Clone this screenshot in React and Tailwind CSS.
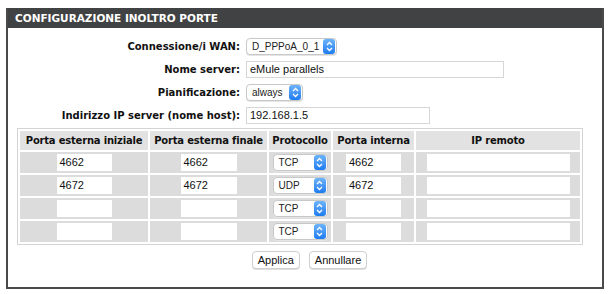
import React from "react";

const Stepper = () => (
  <span className="flex h-[15px] w-[12px] items-center justify-center rounded-[3px] bg-gradient-to-b from-[#6cb3fa] to-[#1a7bf0]">
    <svg width="7" height="11" viewBox="0 0 7 11" fill="none" stroke="white" strokeWidth="1.3">
      <path d="M1 4 L3.5 1.5 L6 4" />
      <path d="M1 7 L3.5 9.5 L6 7" />
    </svg>
  </span>
);

const Select = ({ value, w }) => (
  <div
    className={`flex h-[17px] ${w} items-center justify-between rounded-[4px] border border-[#c8c8c8] bg-white pl-[5px] pr-[1px] text-[10px] text-[#222] shadow-[0_1px_0_#e5e5e5]`}
  >
    <span>{value}</span>
    <Stepper />
  </div>
);

const TextInput = ({ value, w }) => (
  <div className={`h-[17px] ${w} border border-[#d6d6d6] bg-white px-[3px] text-[11px] leading-[15px] text-[#111]`}>
    {value}
  </div>
);

const CellInput = ({ value, w }) => (
  <div className={`h-[17px] ${w} bg-white px-[3px] text-[11px] leading-[17px] text-[#111]`}>{value}</div>
);

const rows = [
  { a: "4662", b: "4662", p: "TCP", c: "4662" },
  { a: "4672", b: "4672", p: "UDP", c: "4672" },
  { a: "", b: "", p: "TCP", c: "" },
  { a: "", b: "", p: "TCP", c: "" },
];

const bold = { fontFamily: '"DejaVu Sans", Verdana, sans-serif' };

export default function App() {
  const sans = { fontFamily: '"Liberation Sans", Arial, sans-serif' };
  return (
    <div className="h-[294px] w-[610px] bg-white pl-[6px] pt-[8px]" style={sans}>
      <div className="flex h-[281px] w-[598px] flex-col border-x-2 border-b-2 border-[#4a4a4a]">
        <div
          className="flex h-[20px] items-center bg-[#414243] pl-[7px] pt-[1px] text-[10.5px] font-bold text-white"
          style={bold}
        >
          CONFIGURAZIONE INOLTRO PORTE
        </div>

        <div className="mt-[10px] grid grid-cols-[232px_1fr] items-center gap-x-[6px] gap-y-[6px]">
          {[
            ["Connessione/i WAN:", <Select value="D_PPPoA_0_1" w="w-[91px]" />],
            ["Nome server:", <TextInput value="eMule parallels" w="w-[258px]" />],
            ["Pianificazione:", <Select value="always" w="w-[57px]" />],
            ["Indirizzo IP server (nome host):", <TextInput value="192.168.1.5" w="w-[184px]" />],
          ].map(([label, ctl], i) => (
            <React.Fragment key={i}>
              <div className="text-right text-[10px] font-bold text-[#111]" style={bold}>
                {label}
              </div>
              <div className="flex">{ctl}</div>
            </React.Fragment>
          ))}
        </div>

        <table className="ml-[9px] mt-[4px] w-[566px] border-separate border-spacing-[2px] border border-[#d4d4d4] bg-white text-[11px]">
          <thead>
            <tr className="h-[19px] whitespace-nowrap text-[10px] tracking-[-0.2px] text-[#111]" style={bold}>
              <th className="w-[128px] bg-[#e2e2e2] p-0 font-bold">Porta esterna iniziale</th>
              <th className="w-[117px] bg-[#e2e2e2] p-0 font-bold">Porta esterna finale</th>
              <th className="w-[62px] bg-[#e2e2e2] p-0 font-bold">Protocollo</th>
              <th className="w-[81px] bg-[#e2e2e2] p-0 font-bold">Porta interna</th>
              <th className="bg-[#e2e2e2] p-0 font-bold">IP remoto</th>
            </tr>
          </thead>
          <tbody>
            {rows.map((r, i) => (
              <tr key={i} className="h-[21px]">
                <td className="bg-[#dcdcdc] p-0">
                  <div className="flex justify-center">
                    <CellInput value={r.a} w="w-[55px]" />
                  </div>
                </td>
                <td className="bg-[#dcdcdc] p-0">
                  <div className="flex justify-center">
                    <CellInput value={r.b} w="w-[56px]" />
                  </div>
                </td>
                <td className="bg-[#dcdcdc] p-0">
                  <div className="flex justify-center">
                    <Select value={r.p} w="w-[55px]" />
                  </div>
                </td>
                <td className="bg-[#dcdcdc] p-0">
                  <div className="flex justify-center">
                    <CellInput value={r.c} w="w-[55px]" />
                  </div>
                </td>
                <td className="bg-[#dcdcdc] p-0">
                  <div className="flex justify-center">
                    <CellInput value="" w="w-[143px]" />
                  </div>
                </td>
              </tr>
            ))}
          </tbody>
        </table>

        <div className="mt-[6px] flex justify-center gap-[9px] pl-[9px]">
          <button className="h-[18px] rounded-[4px] border border-[#cfcfcf] bg-white px-[5px] text-[11px] text-[#111] shadow-[0_1px_0_#e0e0e0]">
            Applica
          </button>
          <button className="h-[18px] rounded-[4px] border border-[#cfcfcf] bg-white px-[5px] text-[11px] text-[#111] shadow-[0_1px_0_#e0e0e0]">
            Annullare
          </button>
        </div>
      </div>
    </div>
  );
}
